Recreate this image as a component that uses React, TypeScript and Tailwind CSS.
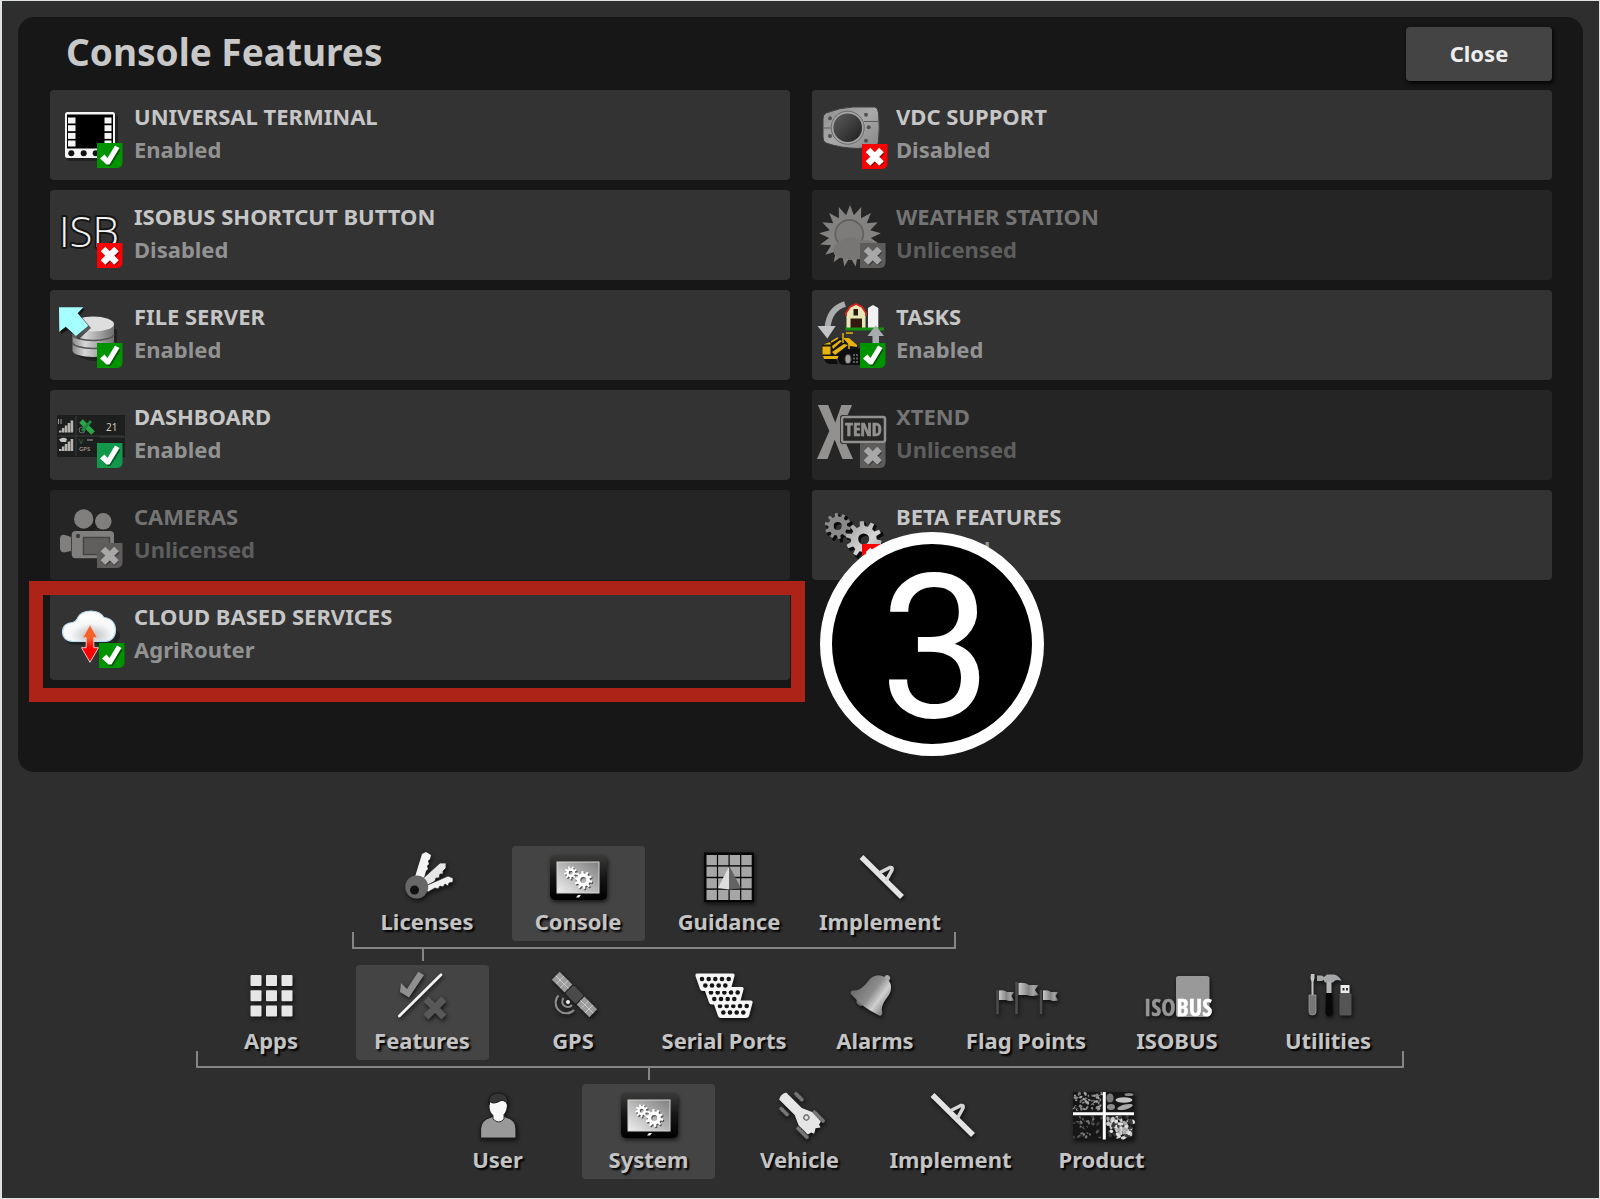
import type { ReactNode } from "react";

type Status = "Enabled" | "Disabled" | "Unlicensed" | "AgriRouter";

/* ---------- drawing helpers ---------- */

function gearPath(cx: number, cy: number, outer: number, inner: number, hole: number, teeth: number) {
  const step = (Math.PI * 2) / teeth;
  const p = (r: number, a: number) => `${(cx + r * Math.cos(a)).toFixed(2)} ${(cy + r * Math.sin(a)).toFixed(2)}`;
  let d = "";
  for (let i = 0; i < teeth; i++) {
    const a = i * step + 0.2;
    d += `${i ? "L" : "M"}${p(inner, a - step * 0.3)}L${p(outer, a - step * 0.17)}L${p(outer, a + step * 0.17)}L${p(inner, a + step * 0.3)}`;
  }
  return `${d}ZM${cx + hole} ${cy}A${hole} ${hole} 0 1 0 ${cx - hole} ${cy}A${hole} ${hole} 0 1 0 ${cx + hole} ${cy}Z`;
}

function starPath(cx: number, cy: number, outer: number, inner: number, points: number) {
  const parts: string[] = [];
  for (let i = 0; i < points * 2; i++) {
    const r = i % 2 ? inner : outer;
    const a = (i * Math.PI) / points - Math.PI / 2;
    parts.push(`${(cx + r * Math.cos(a)).toFixed(2)} ${(cy + r * Math.sin(a)).toFixed(2)}`);
  }
  return `M${parts.join("L")}Z`;
}

function Badge({ kind, x = 39, y = 44, fill }: { kind: "check" | "cross"; x?: number; y?: number; fill: string }) {
  return (
    <g transform={`translate(${x} ${y})`}>
      <path d="M0 0H25.500V20Q25 24.500 20 25H0Z" fill={fill} />
      {kind === "check" ? (
        <>
          <path d="M4.500 17.500L9 13.500L12 17L19.500 4L23.500 7L13.500 23L11 23Z" fill="#000" opacity=".45" />
          <path d="M3 15.500L7.500 11.500L10.500 15L18 2.500L22.500 5L12.500 21.500L9.500 21.500Z" fill="#fff" />
        </>
      ) : (
        <>
          <path d="M7 7.500L20 20.500M20 7.500L7 20.500" stroke="#000" strokeOpacity=".45" strokeWidth="6.500" />
          <path d="M6 6L19.500 19.500M19.500 6L6 19.500" stroke="#fff" strokeWidth="6.500" />
        </>
      )}
    </g>
  );
}

function CardIcon({ children, dim = false }: { children: ReactNode; dim?: boolean }) {
  return (
    <svg
      viewBox="0 0 72 72"
      aria-hidden="true"
      className={dim ? "size-[72px] shrink-0 overflow-visible opacity-60" : "size-[72px] shrink-0 overflow-visible"}
    >
      {children}
    </svg>
  );
}

/* ---------- feature icons ---------- */

const GREEN = "#009300";
const RED = "#fb0000";
const GREY = "#858280";

const UniversalTerminalIcon = () => (
  <CardIcon>
    <rect x="9" y="15" width="51" height="47" rx="3" fill="#000" opacity=".35" />
    <rect x="7" y="13" width="50" height="46" rx="2.500" fill="#f4f4f4" />
    <rect x="9" y="15.500" width="46" height="34" fill="#000" />
    {[18.5, 26.2, 33.9, 41.5].map((y) => (
      <g key={y} fill="#f4f4f4">
        <rect x="10" y={y} width="7.500" height="6" />
        <rect x="46.500" y={y} width="7" height="6" />
      </g>
    ))}
    {[13.3, 25.7, 37.7].map((x) => (
      <circle key={x} cx={x} cy="54.300" r="3" fill="#111" />
    ))}
    <Badge kind="check" fill={GREEN} />
  </CardIcon>
);

const IsbIcon = () => (
  <CardIcon>
    <text
      x="1"
      y="48"
      fontSize="42"
      fill="#f2f2f2"
      stroke="#151515"
      strokeWidth="4"
      strokeLinejoin="round"
      paintOrder="stroke"
      className="font-['Open_Sans',sans-serif] font-light"
    >
      ISB
    </text>
    <Badge kind="cross" fill={RED} />
  </CardIcon>
);

const FileServerIcon = () => (
  <CardIcon>
    <defs>
      <linearGradient id="drum" x1="0" x2="1" y1="0" y2="0">
        <stop offset="0" stopColor="#8b8b8b" />
        <stop offset=".3" stopColor="#d6d6d6" />
        <stop offset="1" stopColor="#6f6f6f" />
      </linearGradient>
    </defs>
    <path d="M18 30V56Q37 68 59 56V30Z" fill="#000" opacity=".35" />
    <path d="M14.500 25V51.500C14.500 60 56 60 56 51.500V25Z" fill="url(#drum)" />
    <path d="M14.500 35C14.500 43.500 56 43.500 56 35M14.500 43C14.500 51.500 56 51.500 56 43" fill="none" stroke="#555" strokeWidth="1.500" />
    <ellipse cx="35.250" cy="25" rx="20.750" ry="7.500" fill="#dedede" />
    <path d="M3 10L27 10L22 16L33 29L21 40L10 31L3 35Z" fill="#000" opacity=".6" />
    <path d="M1 8.300H25.300L19.700 14.300L30.300 26.700L18 37L7.700 27.700L1.300 32.700Z" fill="#a5feff" />
    <Badge kind="check" fill={GREEN} />
  </CardIcon>
);

const signalBars = (x: number, y: number) =>
  [0, 1, 2, 3, 4].map((i) => (
    <rect key={i} x={x + i * 2.9} y={y - 2 - i * 2.5} width="2.600" height={2 + i * 2.5} fill="#b5b3b0" />
  ));

const DashboardIcon = () => (
  <CardIcon>
    <rect x="-1" y="16" width="68" height="42" fill="#1d1f1f" />
    <path d="M18 17V57M42 38H67M0 37H66" stroke="#323535" strokeWidth="1.500" />
    <path d="M0.500 20V25M3 20V25" stroke="#999" strokeWidth="1" />
    <path d="M1 40.500Q5 37.500 9 40L8 43H3Z" fill="#c4c4c4" />
    {signalBars(1, 33.5)}
    {signalBars(1, 52)}
    <circle cx="24" cy="31" r="3" fill="none" stroke="#6b6b6b" />
    <path d="M23 22L35 34" stroke="#2fa54a" strokeWidth="5" />
    <path d="M33 22L24 32" stroke="#1c8a3a" strokeWidth="3" />
    <text x="48" y="32" fontSize="10" fill="#d9c8bb" className="font-['Noto_Sans',sans-serif]">
      21
    </text>
    <text x="21" y="45" fontSize="7" fill="#2c7a3e" className="font-['Noto_Sans',sans-serif]">
      V
    </text>
    <path d="M29 41H35" stroke="#777" strokeWidth="1.500" />
    <text x="21" y="52" fontSize="6" fill="#bda99c" className="font-['Noto_Sans',sans-serif]">
      GPS
    </text>
    <Badge kind="check" fill="#11984a" />
  </CardIcon>
);

const CamerasIcon = () => (
  <CardIcon dim>
    <circle cx="29" cy="24" r="10" fill="#000" opacity=".25" />
    <g fill="#bfbcb9">
      <circle cx="25.700" cy="20" r="9.700" />
      <circle cx="45.300" cy="22.300" r="8.300" />
      <rect x="13.700" y="32" width="42.300" height="27.300" rx="4" />
      <path d="M2 39Q3 35 7 36L13 38V52L6 53.500Q2 53 2 49Z" />
    </g>
    <circle cx="20" cy="37" r="2.200" fill="#4d4c4b" />
    <rect x="25.500" y="38.500" width="26" height="17" fill="#8a8783" stroke="#5c5a58" strokeWidth="1.500" />
    <Badge kind="cross" fill={GREY} />
  </CardIcon>
);

const CloudIcon = () => (
  <CardIcon>
    <defs>
      <linearGradient id="updown" x1="0" x2="0" y1="0" y2="1">
        <stop offset=".35" stopColor="#f4622a" />
        <stop offset=".6" stopColor="#fb0000" />
      </linearGradient>
      <radialGradient id="cloud" cx=".55" cy=".8" r=".7">
        <stop offset="0" stopColor="#b9bbbd" />
        <stop offset=".55" stopColor="#f5f6f7" />
        <stop offset="1" stopColor="#fff" />
      </radialGradient>
    </defs>
    <path d="M16 46Q6 45 7 34Q35 8 62 34Q62 45 54 46Z" fill="#000" opacity=".3" />
    <path
      d="M15 42.500C8 42.500 4.500 38 4.500 33C4.500 27 9 23.500 14.500 23.500C17 23 18 22 19 20C21 15 26 12 33 12C40 12 44 15 46 18.500C53 19 57.500 24 57.500 31C57.500 38 53 42.500 47 42.500Z"
      fill="url(#cloud)"
      stroke="#b5d9ee"
      strokeWidth="1.200"
    />
    <path
      d="M32 26L39.500 38.700H35.800V48.700H40.500L32 63.300L23.500 48.700H28.200V38.700H24.500Z"
      fill="url(#updown)"
      stroke="#e8c9c2"
      strokeWidth="1"
    />
    <Badge kind="check" x={41} fill={GREEN} />
  </CardIcon>
);

const VdcIcon = () => (
  <CardIcon>
    <defs>
      <linearGradient id="knob" x1="0" x2="1" y1="0" y2="1">
        <stop offset="0" stopColor="#5d5d5d" />
        <stop offset="1" stopColor="#1e1e1e" />
      </linearGradient>
      <linearGradient id="plate" x1="0" x2="1" y1="0" y2="1">
        <stop offset="0" stopColor="#8e8e8e" />
        <stop offset=".5" stopColor="#a9a9a9" />
        <stop offset="1" stopColor="#858585" />
      </linearGradient>
    </defs>
    <path
      d="M6 14Q20 8.500 33 8H55Q58 9 58.500 14Q60 29 58.500 42Q58 47 54 47.500L38 49.500Q20 49 6 44Q3 43 3 38V20Q3 15.500 6 14Z"
      fill="url(#plate)"
      stroke="#3f3f3f"
    />
    <path d="M44 22.500H59M3 29H11" stroke="#5e5e5e" strokeWidth="1.200" />
    <circle cx="27.700" cy="28.700" r="16.500" fill="#a5a5a5" stroke="#6a6a6a" />
    <circle cx="27.700" cy="28.700" r="14.300" fill="url(#knob)" />
    {[
      [10, 19.3],
      [10, 37],
      [46, 15.7],
      [48.7, 28.3],
      [46, 41.7],
    ].map(([x, y]) => (
      <circle key={`${x}-${y}`} cx={x} cy={y} r="2" fill="#505050" />
    ))}
    <Badge kind="cross" x={42} y={45} fill={RED} />
  </CardIcon>
);

const WeatherIcon = () => (
  <CardIcon dim>
    <path d={starPath(30, 37, 31, 21, 17)} fill="#c4c0bd" />
    <circle cx="29.300" cy="35" r="14" fill="#bab7b4" stroke="#8f8c8a" strokeWidth="1.800" />
    <path d="M17 58C11 54 12 44 20 43C24 37 36 37 40 42C48 40 56 43 60 48L65 54L60 60H40L30 61Z" fill="#b0adaa" />
    <Badge kind="cross" x={40} fill={GREY} />
  </CardIcon>
);

const TasksIcon = () => (
  <CardIcon>
    <path d="M25 5Q9 10 7.500 29" fill="none" stroke="#a9abad" strokeWidth="6" />
    <path d="M-2.500 27L7.300 39.500L15.700 27Z" fill="#c2c4c6" />
    <path d="M26.500 30V14L30 8L36 5.500L42 8L45.500 14V30Z" fill="#e6e6b6" />
    <path d="M26 17V14L30 8L36 5L42 8L46 14V17" fill="none" stroke="#d8231c" strokeWidth="1.800" />
    <rect x="33.500" y="10" width="4.500" height="6.500" fill="#2a1a12" />
    <rect x="30.500" y="19.500" width="11.500" height="10" fill="#33190e" />
    <path d="M48 30V9L53 6L58.300 9V30Z" fill="#f1f1f1" />
    <path d="M25.500 30H64" stroke="#12900f" strokeWidth="3" />
    <path d="M55.700 26.500L64 37H59V46H52.500V37H47.500Z" fill="#a9acae" />
    <path d="M2 46L12 41L22 39L30 42L38 47V58H3Z" fill="#141414" />
    <g fill="#e8b30c">
      <rect x="2.500" y="47.500" width="8" height="8" />
      <path d="M3 45.500L10 43L11 45.500Z" />
      <path d="M12 47L20 41L22 42L13 50Z" />
      <path d="M12 53L24 45L28 46L15 56Z" />
      <path d="M23 39H29L37 46V48L30 47Z" />
      <path d="M3 57H19L17 60H4Z" />
    </g>
    <path d="M23 34V44M26 34H33M11 43L18 39M29 42V50" stroke="#e8b30c" strokeWidth="1.500" />
    <path d="M4 60H16L18 65H9Q5 64 4 60ZM18 59Q20 51 30 51L44 49V66H24Q18 66 18 59Z" fill="#0e0e0e" />
    <ellipse cx="28" cy="60" rx="3" ry="4.500" fill="#a0a0a0" stroke="#444" />
    <path d="M34 55V64M37 55V64" stroke="#777" strokeWidth="1.500" strokeDasharray="2 1.500" />
    <Badge kind="check" x={40} fill={GREEN} />
  </CardIcon>
);

const XtendIcon = () => (
  <CardIcon dim>
    <text
      x="-3"
      y="59.500"
      fontSize="76"
      fill="#dddad6"
      className="font-['Liberation_Sans_Narrow','Open_Sans_Condensed','Roboto_Condensed','Roboto',sans-serif] font-bold"
    >
      X
    </text>
    <rect x="20" y="16" width="47" height="29" rx="3" fill="#252525" />
    <rect x="22" y="18" width="43" height="25" rx="2" fill="#252525" stroke="#dddad6" strokeWidth="2.500" />
    <text
      x="43.500"
      y="37"
      textAnchor="middle"
      fontSize="18"
      fill="#dddad6"
      stroke="#dddad6"
      strokeWidth=".6"
      className="font-['Liberation_Sans_Narrow','Open_Sans_Condensed','Roboto_Condensed','Roboto',sans-serif] font-bold"
    >
      TEND
    </text>
    <Badge kind="cross" x={40} fill={GREY} />
  </CardIcon>
);

const BetaIcon = () => (
  <CardIcon>
    <defs>
      <linearGradient id="gear" x1="0" x2="1" y1="0" y2="1">
        <stop offset="0" stopColor="#999" />
        <stop offset=".6" stopColor="#d5d5d5" />
        <stop offset="1" stopColor="#999" />
      </linearGradient>
    </defs>
    <g fillRule="evenodd">
      <path d={gearPath(20, 29.5, 14, 10, 4, 10)} fill="#0b0b0b" />
      <path d={gearPath(17.7, 27, 13, 9.5, 4, 10)} fill="#8a8a8a" />
      <path d={gearPath(46, 42.5, 19, 13.5, 5.5, 10)} fill="#0b0b0b" />
      <path d={gearPath(43.7, 40, 18, 13, 5.5, 10)} fill="url(#gear)" />
    </g>
    <Badge kind="cross" x={42} y={45} fill={RED} />
  </CardIcon>
);

/* ---------- navigation icons ---------- */

function NavIcon({ children }: { children: ReactNode }) {
  return (
    <svg
      viewBox="0 0 60 56"
      aria-hidden="true"
      className="h-14 w-[60px] overflow-visible drop-shadow-[1px_2px_2px_rgba(0,0,0,0.7)]"
    >
      {children}
    </svg>
  );
}

const LicensesIcon = () => (
  <NavIcon>
    <path d="M17 30L25 4L29 2L34 5L33 9L31 11L32 14L30 16L31 19L29 21L26 32Z" fill="#f4f4f4" />
    <path d="M22 32L43 13L49 13L49 18L46 21L46 24L43 24L42 28L39 28L38 31L28 37Z" fill="#e6e6e6" stroke="#2e2e2e" strokeWidth=".8" />
    <path d="M26 37L51 26L56 28L56 32L52 33L51 36L48 34L46 37L43 36L41 39L38 38L31 42Z" fill="#f0f0f0" stroke="#2e2e2e" strokeWidth=".8" />
    <circle cx="19.700" cy="37" r="11.500" fill="#676767" />
    <circle cx="17.500" cy="40" r="4.500" fill="#111" />
  </NavIcon>
);

const ConsoleIcon = ({ id }: { id: string }) => (
  <NavIcon>
    <defs>
      <linearGradient id={`${id}-case`} x1="0" x2="0" y1="0" y2="1">
        <stop offset="0" stopColor="#3a3a38" />
        <stop offset=".5" stopColor="#151515" />
        <stop offset="1" stopColor="#000" />
      </linearGradient>
      <linearGradient id={`${id}-screen`} x1="0" x2="1" y1="1" y2="0">
        <stop offset="0" stopColor="#efefef" />
        <stop offset="1" stopColor="#7f7f7f" />
      </linearGradient>
    </defs>
    <rect x="2" y="5" width="57" height="45" rx="5" fill={`url(#${id}-case)`} />
    <rect x="9" y="12" width="42" height="31" fill={`url(#${id}-screen)`} stroke="#d5d5d5" />
    <g fillRule="evenodd">
      <path d={gearPath(23.7, 24, 6.5, 4.5, 2, 9)} fill="#555" />
      <path d={gearPath(36.3, 31.2, 9, 6.5, 3, 10)} fill="#555" />
      <path d={gearPath(22.7, 22.7, 6.5, 4.5, 2, 9)} fill="#fff" />
      <path d={gearPath(35.3, 30, 9, 6.5, 3, 10)} fill="#fff" />
    </g>
    <path d="M28 47.500L30 45H33L31 47.500Z" fill="#eee" />
  </NavIcon>
);

const GuidanceIcon = () => (
  <NavIcon>
    <rect x="5" y="2.500" width="50" height="49.500" fill="#050505" />
    {[0, 1, 2, 3].map((r) =>
      [0, 1, 2, 3].map((c) => (
        <rect key={`${r}-${c}`} x={7.5 + c * 11.6} y={5 + r * 11.6} width="10.400" height="10.200" fill="#a6a6a6" />
      )),
    )}
    <path d="M30.300 16L19 38L30.300 39.500Z" fill="#dedede" />
    <path d="M30.300 16L42 38L30.300 39.500Z" fill="#636363" />
  </NavIcon>
);

const ImplementIcon = () => (
  <NavIcon>
    <path d="M11.500 7L52 47" stroke="#e4e4e4" strokeWidth="5.500" />
    <path d="M29 23L40 17.500Q43 17 42 20L36 31" fill="none" stroke="#d6d6d6" strokeWidth="3.500" />
  </NavIcon>
);

const AppsIcon = () => (
  <NavIcon>
    {[0, 1, 2].map((r) =>
      [0, 1, 2].map((c) => (
        <rect key={`${r}-${c}`} x={9.5 + c * 15.5} y={6 + r * 15.2} width="11" height="11" rx="1" fill="#e6e6e6" />
      )),
    )}
  </NavIcon>
);

const FeaturesIcon = () => (
  <NavIcon>
    <path d="M9 14L15 20L26.300 2.700L32 6L17 28.500L8 23Z" fill="#8f8f8f" />
    <path d="M34 30L52 48M52 30L34 48" stroke="#585858" strokeWidth="7" />
    <path d="M7.300 47L49 5.700" stroke="#f2f2f2" strokeWidth="2.800" strokeLinecap="round" />
  </NavIcon>
);

const GpsIcon = () => (
  <NavIcon>
    <g transform="rotate(45 31.500 25.500)">
      <rect x="5" y="20" width="18" height="11" fill="#9c9c9c" />
      <rect x="40" y="20" width="18" height="11" fill="#9c9c9c" />
      <path d="M5 25.500H23M11 20V31M17 20V31M40 25.500H58M46 20V31M52 20V31" stroke="#cfcfcf" strokeWidth=".9" />
      <rect x="24" y="19.500" width="15" height="12" rx="2" fill="#4a4a4a" />
    </g>
    <path
      d="M20.500 29A5.500 5.500 0 1 0 29 36M15.500 26.500A10.500 10.500 0 0 0 31 41"
      fill="none"
      stroke="#8c8c8c"
      strokeWidth="2"
    />
    <circle cx="25" cy="33" r="2" fill="#eee" />
  </NavIcon>
);

const Connector = ({ x, y }: { x: number; y: number }) => (
  <g transform={`translate(${x} ${y})`}>
    <path
      d="M3 4.500H39Q41 4.500 40.500 7L37 20Q36.500 22 34 22H9Q6.500 22 6 20L1.500 7Q1 4.500 3 4.500Z"
      fill="#f6f6f6"
    />
    {[8, 14.7, 21.3, 28, 34.7].map((cx) => (
      <circle key={cx} cx={cx} cy="10" r="2.300" fill="#151515" />
    ))}
    {[11.3, 18, 24.7, 31.3].map((cx) => (
      <circle key={cx} cx={cx} cy="16.500" r="2.300" fill="#151515" />
    ))}
  </g>
);

const SerialPortsIcon = () => (
  <NavIcon>
    <Connector x={18} y={27} />
    <Connector x={9} y={13.5} />
    <Connector x={0} y={0} />
  </NavIcon>
);

const AlarmsIcon = () => (
  <NavIcon>
    <defs>
      <linearGradient id="bell" x1="0" x2="1" y1="0" y2="0">
        <stop offset="0" stopColor="#6c6c6c" />
        <stop offset=".45" stopColor="#8d8d8d" />
        <stop offset=".7" stopColor="#d0d0d0" />
        <stop offset="1" stopColor="#7d7d7d" />
      </linearGradient>
    </defs>
    <g transform="rotate(37 26 29)">
      <circle cx="27" cy="3.500" r="3" fill="#aaa" />
      <ellipse cx="20" cy="39" rx="4" ry="3" fill="#6a6a6a" />
      <path
        d="M26 4C34 4 38.500 10 38.500 17C38.500 27 40 31 44 34Q46 37 43 38Q26 42 8 38Q5 37 7 34C11 31 13.500 27 13.500 17C13.500 10 18 4 26 4Z"
        fill="url(#bell)"
      />
    </g>
  </NavIcon>
);

const FlagPointsIcon = () => (
  <NavIcon>
    <defs>
      <linearGradient id="flag" x1="0" x2="1" y1="0" y2="0">
        <stop offset="0" stopColor="#c9c9c9" />
        <stop offset=".5" stopColor="#858585" />
        <stop offset=".75" stopColor="#a5a5a5" />
        <stop offset="1" stopColor="#777" />
      </linearGradient>
    </defs>
    <path d="M1.500 21V45M20.500 13V45M45 21V45" stroke="#4c4c4c" strokeWidth="2.500" />
    <path d="M3 21.500Q8 20.500 11 23H18L15.500 27L18 31.500Q13 32.500 10 31H3Z" fill="url(#flag)" />
    <path d="M22.500 14Q29 13 33 16H42.500L39 21L42.500 26Q35 28 31 26H22.500Z" fill="url(#flag)" />
    <path d="M47 21.500Q52 20.500 55 23H62L59.500 27L62 31.500Q57 32.500 54 31H47Z" fill="url(#flag)" />
  </NavIcon>
);

const IsobusIcon = () => (
  <NavIcon>
    <rect x="29" y="7" width="33.500" height="41" rx="2.500" fill="#999" />
    <g
      className="font-['Liberation_Sans_Narrow','Open_Sans_Condensed','Roboto_Condensed','Roboto',sans-serif] font-bold"
      fontSize="24"
      strokeWidth=".5"
    >
      <text x="28.500" y="47" textAnchor="end" fill="#979797" stroke="#979797">
        ISO
      </text>
      <text x="29.500" y="47" fill="#fff" stroke="#fff">
        BUS
      </text>
    </g>
  </NavIcon>
);

const UtilitiesIcon = () => (
  <NavIcon>
    <path d="M13 5H16.500V9L15.500 13V26H13.500V13L12.500 9Z" fill="#c4c4c4" />
    <path d="M11 26H18V43Q18 46 14.500 46Q11 46 11 43Z" fill="#747678" stroke="#999" strokeWidth=".8" />
    <path d="M19 6.500H24L26 8L29 5.500H36Q41 6.500 43.500 12Q38 9.500 35 13.500H27L25.500 11L24 12H19Z" fill="#a4a6a8" />
    <rect x="28.500" y="13" width="5" height="11" fill="#b5b5b5" />
    <path d="M28 24H34L35 45Q31 50 27.500 45Z" fill="#080808" />
    <rect x="42.500" y="16" width="9" height="8" fill="#eee" />
    <path d="M44.500 19H46.500V21.500H44.500ZM48 19H50V21.500H48Z" fill="#333" />
    <rect x="41.500" y="24" width="12" height="22.500" rx="1.500" fill="#555" />
  </NavIcon>
);

const UserIcon = () => (
  <NavIcon>
    <path d="M12.500 50V41Q13 32 22 29.500L26 28H35L39 29.500Q48 32 48 41V50Z" fill="#999" stroke="#1c1c1c" strokeWidth="1.200" />
    <path d="M25 26H36V31Q31 37 25 31Z" fill="#f7f7f7" stroke="#333" />
    <path d="M21.500 14Q20.500 28 30 28.500Q39.500 28 39 14Q31 5 21.500 14Z" fill="#f7f7f7" />
    <path d="M21 17Q19 6 29 5Q41 4 39.500 17Q38 12 33 12.500Q25 17 22 13.500Z" fill="#353535" stroke="#161616" />
  </NavIcon>
);

const VehicleIcon = () => (
  <NavIcon>
    <g transform="rotate(45 30 26)">
      <g fill="#777" stroke="#3a3a3a" strokeWidth="1" strokeDasharray="1.500 1.500">
        <rect x="11" y="12.500" width="12" height="4" rx="1.500" />
        <rect x="11" y="33.500" width="12" height="4" rx="1.500" />
        <rect x="37" y="12.500" width="16" height="4" rx="1.500" />
        <rect x="37" y="35.500" width="16" height="4" rx="1.500" />
      </g>
      <path d="M5 20.500H27L37 16L50 16.500L51 20L54 21L51 25L54 30L51 31L50 35L37 35L27 30.500H5Q2 25.500 5 20.500Z" fill="#e6e6e6" />
      <circle cx="37" cy="24" r="2.500" fill="none" stroke="#777" strokeWidth="1.500" />
    </g>
  </NavIcon>
);

interface Grain {
  x: number;
  y: number;
  rx: number;
  ry: number;
  angle: number;
  fill: string;
}

function scatter(x: number, y: number, w: number, h: number, n: number, size: number, shades: string[], seed: number): Grain[] {
  let s = seed;
  const next = () => {
    s = (s * 16807) % 2147483647;
    return s / 2147483647;
  };
  return Array.from({ length: n }, () => ({
    x: x + next() * w,
    y: y + next() * h,
    rx: size * (0.7 + next() * 0.6),
    ry: size * (0.5 + next() * 0.4),
    angle: Math.floor(next() * 180),
    fill: shades[Math.floor(next() * shades.length)],
  }));
}

const GRAINS: Grain[] = [
  ...scatter(2, 5, 28, 18, 80, 1.5, ["#a5a5a5", "#8a8a8a", "#1c1c1c", "#777"], 7),
  ...scatter(2, 29, 28, 21, 55, 1.5, ["#5a5a5a", "#777", "#141414", "#3c3c3c"], 91),
  ...scatter(36, 29, 25, 21, 75, 2.4, ["#c9c9c9", "#a8a8a8", "#e0e0e0", "#3a3a3a"], 1234),
];

const ProductIcon = () => (
  <NavIcon>
    <rect x="1" y="4" width="61" height="47.500" fill="#161616" />
    {GRAINS.map((g, i) => (
      <ellipse
        key={i}
        cx={g.x}
        cy={g.y}
        rx={g.rx}
        ry={g.ry}
        transform={`rotate(${g.angle} ${g.x} ${g.y})`}
        fill={g.fill}
      />
    ))}
    <g fill="#a8a8a8">
      <ellipse cx="38" cy="10" rx="3.500" ry="4.500" fill="#777" />
      <ellipse cx="52" cy="12" rx="8.500" ry="2.800" fill="#c4c4c4" />
      <ellipse cx="53" cy="19" rx="8" ry="2.500" transform="rotate(-14 53 19)" />
      <ellipse cx="39" cy="19" rx="4" ry="3" fill="#8c8c8c" />
      <ellipse cx="57" cy="6.500" rx="4.500" ry="1.500" fill="#888" />
    </g>
    <path d="M32.300 4V51.500M1 25.700H62" stroke="#fff" strokeWidth="3" />
  </NavIcon>
);

/* ---------- page parts ---------- */

interface Feature {
  name: string;
  status: Status;
  icon: ReactNode;
}

const FEATURES: Feature[] = [
  { name: "UNIVERSAL TERMINAL", status: "Enabled", icon: <UniversalTerminalIcon /> },
  { name: "VDC SUPPORT", status: "Disabled", icon: <VdcIcon /> },
  { name: "ISOBUS SHORTCUT BUTTON", status: "Disabled", icon: <IsbIcon /> },
  { name: "WEATHER STATION", status: "Unlicensed", icon: <WeatherIcon /> },
  { name: "FILE SERVER", status: "Enabled", icon: <FileServerIcon /> },
  { name: "TASKS", status: "Enabled", icon: <TasksIcon /> },
  { name: "DASHBOARD", status: "Enabled", icon: <DashboardIcon /> },
  { name: "XTEND", status: "Unlicensed", icon: <XtendIcon /> },
  { name: "CAMERAS", status: "Unlicensed", icon: <CamerasIcon /> },
  { name: "BETA FEATURES", status: "Disabled", icon: <BetaIcon /> },
  { name: "CLOUD BASED SERVICES", status: "AgriRouter", icon: <CloudIcon /> },
];

function FeatureCard({ name, status, icon }: Feature) {
  const locked = status === "Unlicensed";
  return (
    <button
      type="button"
      disabled={locked}
      className={
        locked
          ? "flex h-[90px] w-full items-center rounded bg-[#252525] pl-2 text-left text-[#747474]"
          : "flex h-[90px] w-full items-center rounded bg-[#333333] pl-2 text-left text-[#c6c6c6]"
      }
    >
      {icon}
      <span className="flex flex-col pb-1 pl-1 text-[22px] leading-[33px] font-bold">
        <span>{name}</span>
        <span className={locked ? "text-[#5e5e5e]" : "text-[#929292]"}>{status}</span>
      </span>
    </button>
  );
}

interface NavItem {
  label: string;
  icon: ReactNode;
  active?: boolean;
}

const FEATURE_TABS: NavItem[] = [
  { label: "Licenses", icon: <LicensesIcon /> },
  { label: "Console", icon: <ConsoleIcon id="console" />, active: true },
  { label: "Guidance", icon: <GuidanceIcon /> },
  { label: "Implement", icon: <ImplementIcon /> },
];

const SYSTEM_TABS: NavItem[] = [
  { label: "Apps", icon: <AppsIcon /> },
  { label: "Features", icon: <FeaturesIcon />, active: true },
  { label: "GPS", icon: <GpsIcon /> },
  { label: "Serial Ports", icon: <SerialPortsIcon /> },
  { label: "Alarms", icon: <AlarmsIcon /> },
  { label: "Flag Points", icon: <FlagPointsIcon /> },
  { label: "ISOBUS", icon: <IsobusIcon /> },
  { label: "Utilities", icon: <UtilitiesIcon /> },
];

const MAIN_TABS: NavItem[] = [
  { label: "User", icon: <UserIcon /> },
  { label: "System", icon: <ConsoleIcon id="system" />, active: true },
  { label: "Vehicle", icon: <VehicleIcon /> },
  { label: "Implement", icon: <ImplementIcon /> },
  { label: "Product", icon: <ProductIcon /> },
];

function TabRow({ label, items, tick }: { label: string; items: NavItem[]; tick?: string }) {
  return (
    <nav aria-label={label}>
      <ul className="flex">
        {items.map((item) => (
          <li key={item.label} className="flex w-[151px] justify-center">
            <button
              type="button"
              aria-current={item.active ? "page" : undefined}
              className={
                item.active
                  ? "flex h-[95px] w-[133px] flex-col items-center rounded bg-[#444444] pt-1"
                  : "flex h-[95px] w-[133px] flex-col items-center rounded pt-1"
              }
            >
              {item.icon}
              <span className="text-[22px] leading-[30px] font-bold whitespace-nowrap text-[#c4c4c4] [text-shadow:2px_2px_2px_#000]">
                {item.label}
              </span>
            </button>
          </li>
        ))}
      </ul>
      {tick && (
        <div className="pointer-events-none relative -mt-[9px] h-[17px] border-x-2 border-b-2 border-[#858585]">
          <span className={`absolute top-full h-[14px] w-[2px] bg-[#858585] ${tick}`} />
        </div>
      )}
    </nav>
  );
}

export default function App() {
  return (
    <main className="flex min-h-screen flex-col border-t border-r border-b border-l-2 border-[#dfe3df] bg-[#2e2e2e] font-['Noto_Sans',sans-serif]">
      <section className="mx-4 mt-4 rounded-2xl bg-[#171717] pt-[10px] pr-[31px] pb-[92px] pl-8">
        <header className="mb-[9px] flex items-center justify-between pl-4">
          <h1 className="pb-1 text-[37px] leading-[48px] font-bold text-[#c8c8c8]">Console Features</h1>
          <button
            type="button"
            className="h-[54px] w-[146px] rounded bg-[#444444] pb-[2px] text-[22px] font-bold text-[#eeeeee] shadow-[1px_2px_4px_#000]"
          >
            Close
          </button>
        </header>
        <ul className="grid grid-cols-2 gap-x-[22px] gap-y-[10px]">
          {FEATURES.map((feature) => (
            <li key={feature.name} className="relative">
              <FeatureCard {...feature} />
              {feature.status === "AgriRouter" && (
                <>
                  <div className="pointer-events-none absolute -top-[9px] -right-[15px] -bottom-[22px] -left-[21px] border-[14px] border-[#ae2317]" />
                  <div className="pointer-events-none absolute -top-[58px] left-[calc(100%+30px)] z-10 flex size-[224px] items-center justify-center rounded-full border-[12px] border-white bg-black pt-[10px] pl-2 font-['Roboto',sans-serif] text-[200px] leading-[190px] text-white">
                    3
                  </div>
                </>
              )}
            </li>
          ))}
        </ul>
      </section>

      <div className="mt-[74px] flex flex-col items-center gap-4 pr-[2px] pb-[18px]">
        <div className="mr-[292px]">
          <TabRow label="Features" items={FEATURE_TABS} tick="left-[68px]" />
        </div>
        <TabRow label="System" items={SYSTEM_TABS} tick="left-[450px]" />
        <TabRow label="Main" items={MAIN_TABS} />
      </div>
    </main>
  );
}
